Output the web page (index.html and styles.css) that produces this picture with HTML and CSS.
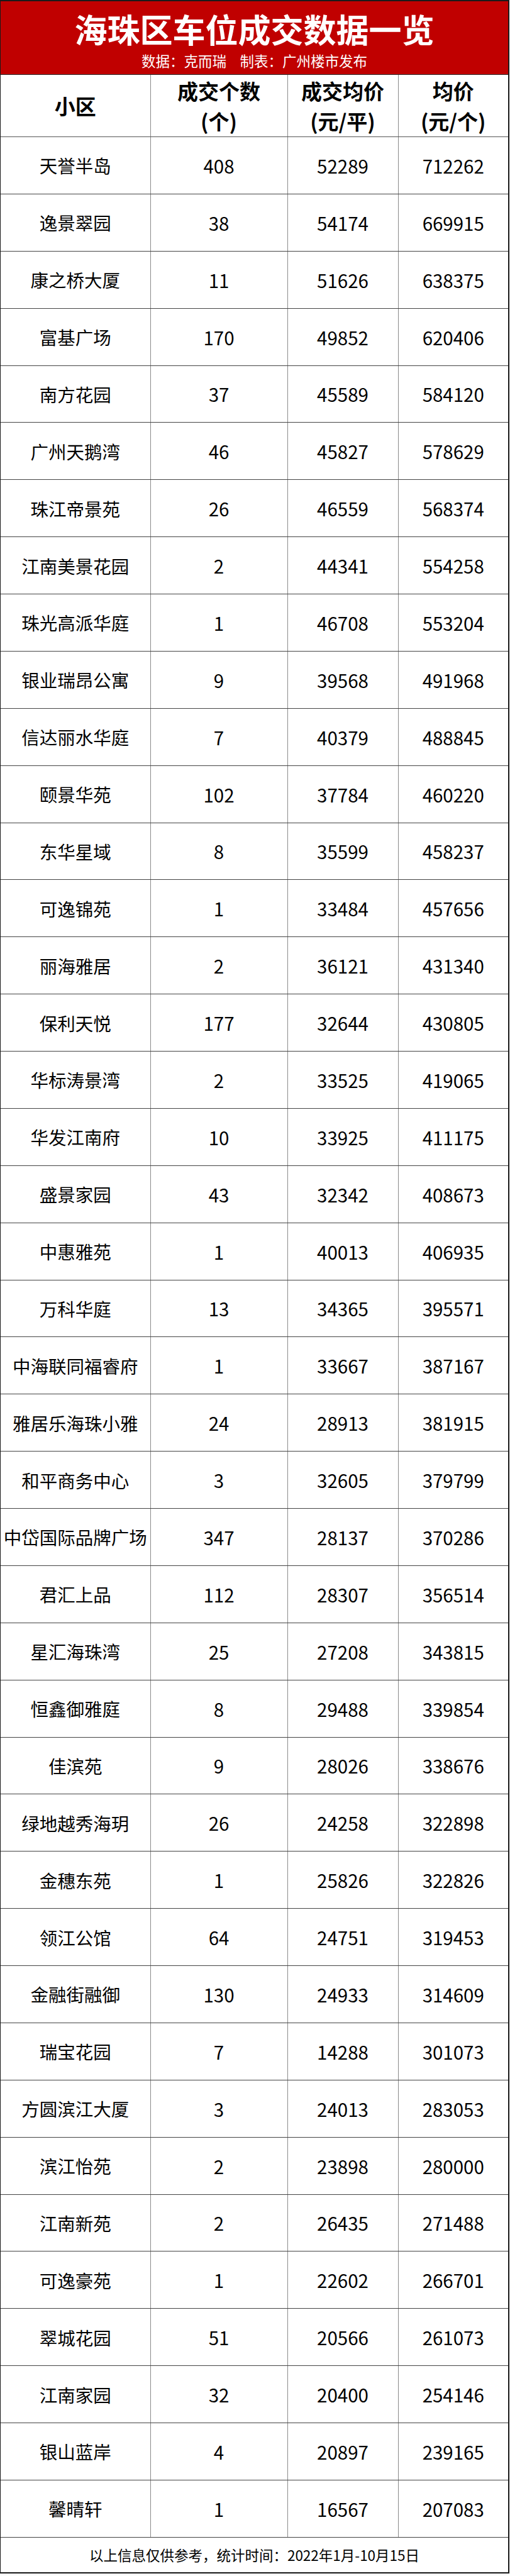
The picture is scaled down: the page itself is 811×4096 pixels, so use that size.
FILE: index.html
```html
<!DOCTYPE html>
<html lang="zh-CN">
<head>
<meta charset="utf-8">
<title>海珠区车位成交数据一览</title>
<link rel="stylesheet" href="styles.css">
</head>
<body>
<div class="sheet">
  <header class="banner">
    <h1 class="title">海珠区车位成交数据一览</h1>
    <p class="credit"><span>数据：克而瑞</span><span class="gap">制表：广州楼市发布</span></p>
  </header>
  <div class="row head">
    <div class="cell">小区</div>
    <div class="cell">成交个数<br>(个)</div>
    <div class="cell">成交均价<br>(元/平)</div>
    <div class="cell">均价<br>(元/个)</div>
  </div>
  <div class="row"><div class="cell name">天誉半岛</div><div class="cell num">408</div><div class="cell num">52289</div><div class="cell num">712262</div></div>
  <div class="row"><div class="cell name">逸景翠园</div><div class="cell num">38</div><div class="cell num">54174</div><div class="cell num">669915</div></div>
  <div class="row"><div class="cell name">康之桥大厦</div><div class="cell num">11</div><div class="cell num">51626</div><div class="cell num">638375</div></div>
  <div class="row"><div class="cell name">富基广场</div><div class="cell num">170</div><div class="cell num">49852</div><div class="cell num">620406</div></div>
  <div class="row"><div class="cell name">南方花园</div><div class="cell num">37</div><div class="cell num">45589</div><div class="cell num">584120</div></div>
  <div class="row"><div class="cell name">广州天鹅湾</div><div class="cell num">46</div><div class="cell num">45827</div><div class="cell num">578629</div></div>
  <div class="row"><div class="cell name">珠江帝景苑</div><div class="cell num">26</div><div class="cell num">46559</div><div class="cell num">568374</div></div>
  <div class="row"><div class="cell name">江南美景花园</div><div class="cell num">2</div><div class="cell num">44341</div><div class="cell num">554258</div></div>
  <div class="row"><div class="cell name">珠光高派华庭</div><div class="cell num">1</div><div class="cell num">46708</div><div class="cell num">553204</div></div>
  <div class="row"><div class="cell name">银业瑞昂公寓</div><div class="cell num">9</div><div class="cell num">39568</div><div class="cell num">491968</div></div>
  <div class="row"><div class="cell name">信达丽水华庭</div><div class="cell num">7</div><div class="cell num">40379</div><div class="cell num">488845</div></div>
  <div class="row"><div class="cell name">颐景华苑</div><div class="cell num">102</div><div class="cell num">37784</div><div class="cell num">460220</div></div>
  <div class="row"><div class="cell name">东华星域</div><div class="cell num">8</div><div class="cell num">35599</div><div class="cell num">458237</div></div>
  <div class="row"><div class="cell name">可逸锦苑</div><div class="cell num">1</div><div class="cell num">33484</div><div class="cell num">457656</div></div>
  <div class="row"><div class="cell name">丽海雅居</div><div class="cell num">2</div><div class="cell num">36121</div><div class="cell num">431340</div></div>
  <div class="row"><div class="cell name">保利天悦</div><div class="cell num">177</div><div class="cell num">32644</div><div class="cell num">430805</div></div>
  <div class="row"><div class="cell name">华标涛景湾</div><div class="cell num">2</div><div class="cell num">33525</div><div class="cell num">419065</div></div>
  <div class="row"><div class="cell name">华发江南府</div><div class="cell num">10</div><div class="cell num">33925</div><div class="cell num">411175</div></div>
  <div class="row"><div class="cell name">盛景家园</div><div class="cell num">43</div><div class="cell num">32342</div><div class="cell num">408673</div></div>
  <div class="row"><div class="cell name">中惠雅苑</div><div class="cell num">1</div><div class="cell num">40013</div><div class="cell num">406935</div></div>
  <div class="row"><div class="cell name">万科华庭</div><div class="cell num">13</div><div class="cell num">34365</div><div class="cell num">395571</div></div>
  <div class="row"><div class="cell name">中海联同福睿府</div><div class="cell num">1</div><div class="cell num">33667</div><div class="cell num">387167</div></div>
  <div class="row"><div class="cell name">雅居乐海珠小雅</div><div class="cell num">24</div><div class="cell num">28913</div><div class="cell num">381915</div></div>
  <div class="row"><div class="cell name">和平商务中心</div><div class="cell num">3</div><div class="cell num">32605</div><div class="cell num">379799</div></div>
  <div class="row"><div class="cell name">中岱国际品牌广场</div><div class="cell num">347</div><div class="cell num">28137</div><div class="cell num">370286</div></div>
  <div class="row"><div class="cell name">君汇上品</div><div class="cell num">112</div><div class="cell num">28307</div><div class="cell num">356514</div></div>
  <div class="row"><div class="cell name">星汇海珠湾</div><div class="cell num">25</div><div class="cell num">27208</div><div class="cell num">343815</div></div>
  <div class="row"><div class="cell name">恒鑫御雅庭</div><div class="cell num">8</div><div class="cell num">29488</div><div class="cell num">339854</div></div>
  <div class="row"><div class="cell name">佳滨苑</div><div class="cell num">9</div><div class="cell num">28026</div><div class="cell num">338676</div></div>
  <div class="row"><div class="cell name">绿地越秀海玥</div><div class="cell num">26</div><div class="cell num">24258</div><div class="cell num">322898</div></div>
  <div class="row"><div class="cell name">金穗东苑</div><div class="cell num">1</div><div class="cell num">25826</div><div class="cell num">322826</div></div>
  <div class="row"><div class="cell name">领江公馆</div><div class="cell num">64</div><div class="cell num">24751</div><div class="cell num">319453</div></div>
  <div class="row"><div class="cell name">金融街融御</div><div class="cell num">130</div><div class="cell num">24933</div><div class="cell num">314609</div></div>
  <div class="row"><div class="cell name">瑞宝花园</div><div class="cell num">7</div><div class="cell num">14288</div><div class="cell num">301073</div></div>
  <div class="row"><div class="cell name">方圆滨江大厦</div><div class="cell num">3</div><div class="cell num">24013</div><div class="cell num">283053</div></div>
  <div class="row"><div class="cell name">滨江怡苑</div><div class="cell num">2</div><div class="cell num">23898</div><div class="cell num">280000</div></div>
  <div class="row"><div class="cell name">江南新苑</div><div class="cell num">2</div><div class="cell num">26435</div><div class="cell num">271488</div></div>
  <div class="row"><div class="cell name">可逸豪苑</div><div class="cell num">1</div><div class="cell num">22602</div><div class="cell num">266701</div></div>
  <div class="row"><div class="cell name">翠城花园</div><div class="cell num">51</div><div class="cell num">20566</div><div class="cell num">261073</div></div>
  <div class="row"><div class="cell name">江南家园</div><div class="cell num">32</div><div class="cell num">20400</div><div class="cell num">254146</div></div>
  <div class="row"><div class="cell name">银山蓝岸</div><div class="cell num">4</div><div class="cell num">20897</div><div class="cell num">239165</div></div>
  <div class="row"><div class="cell name">馨晴轩</div><div class="cell num">1</div><div class="cell num">16567</div><div class="cell num">207083</div></div>
  <footer class="note">以上信息仅供参考，统计时间：2022年1月-10月15日</footer>
</div>
</body>
</html>
```

FILE: styles.css
```css
* { box-sizing: border-box; }

html, body {
  margin: 0;
  padding: 0;
  background: #ffffff;
}

body {
  font-family: "Noto Sans CJK SC", "Microsoft YaHei", "Noto Sans", sans-serif;
  color: #000000;
}

.sheet {
  width: 810px;
  border: 1px solid #1a1a1a;
  border-top-width: 2px;
  border-right-width: 2px;
  border-bottom-width: 2px;
  display: flex;
  flex-direction: column;
}

.banner {
  height: 117px;
  background: #c00000;
  border-bottom: 1px solid #222222;
  display: flex;
  flex-direction: column;
  align-items: center;
  padding-top: 18px;
  gap: 12px;
}

.title {
  margin: 0;
  font-size: 52px;
  line-height: 52px;
  font-weight: 700;
  color: #ffffff;
  letter-spacing: 0;
}

.credit {
  margin: 0;
  font-size: 22.5px;
  line-height: 24px;
  font-weight: 400;
  color: #ffffff;
}

.credit .gap {
  margin-left: 0.95em;
}

.row {
  display: grid;
  grid-template-columns: 237.5px 218px 176px 1fr;
  height: 90.875px;
  border-bottom: 1px solid #444444;
}

.row.head {
  height: 99px;
  border-bottom-color: #555555;
}

.cell {
  display: flex;
  align-items: center;
  justify-content: center;
  text-align: center;
  white-space: nowrap;
}

.cell + .cell {
  border-left: 1px solid #8a8a8a;
}

.head .cell {
  font-size: 33px;
  line-height: 48px;
  font-weight: 700;
}

.name {
  font-size: 28.5px;
  font-weight: 400;
}

.num {
  font-size: 29.5px;
  font-weight: 400;
}

.note {
  height: 55px;
  display: flex;
  align-items: center;
  justify-content: center;
  font-size: 22.5px;
  font-weight: 400;
}
```
